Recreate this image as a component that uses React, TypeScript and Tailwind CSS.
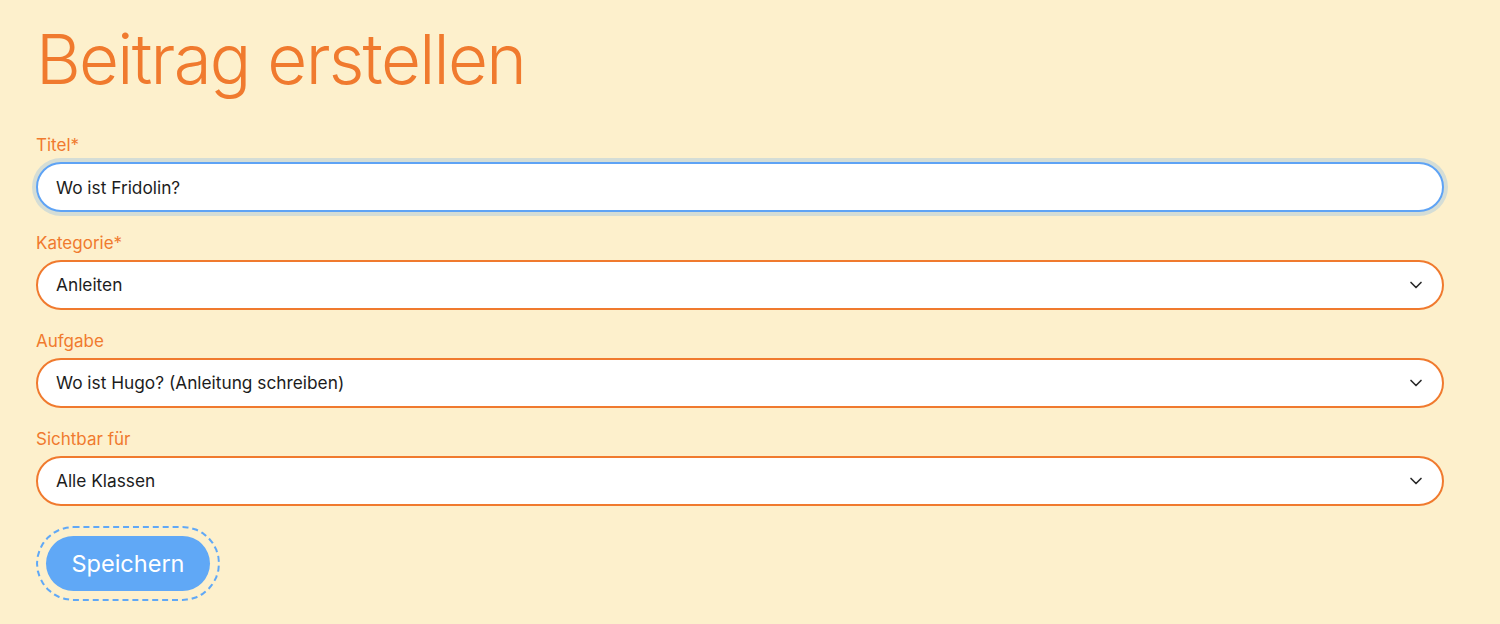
import { ChevronDown } from "lucide-react";

const font = { fontFamily: "Inter, 'Noto Sans', sans-serif" };

function SelectField({ label, value }: { label: string; value: string }) {
  return (
    <div className="mt-[19px]">
      <label className="mb-[5px] block text-[17px] leading-6 text-[#f07a2e]">{label}</label>
      <div className="relative">
        <select
          defaultValue={value}
          className="block h-[50px] w-full appearance-none rounded-full border-2 border-[#f07a2e] bg-white pl-[18px] pr-12 text-[17.3px] text-[#1c1c1c] outline-none"
        >
          <option>{value}</option>
        </select>
        <ChevronDown
          size={20}
          strokeWidth={2}
          className="pointer-events-none absolute right-[18px] top-1/2 -translate-y-1/2 text-[#2a2a2a]"
        />
      </div>
    </div>
  );
}

export default function App() {
  return (
    <div
      className="min-h-[624px] w-full bg-[#fdf0cc] px-9 pt-[23px] pb-8"
      style={font}
    >
      <h1 className="text-[69px] font-light leading-[72px] tracking-tight text-[#f07a2e]">
        Beitrag erstellen
      </h1>

      <form className="mt-[38px] w-[1408px]">
        <div>
          <label className="mb-[5px] block text-[17px] leading-6 text-[#f07a2e]">Titel*</label>
          <input
            type="text"
            defaultValue="Wo ist Fridolin?"
            className="block h-[50px] w-full rounded-full border-2 border-[#5ea3f5] bg-white pl-[18px] pr-5 text-[17.3px] text-[#1c1c1c] outline-none ring-4 ring-[#d4ddd6]"
          />
        </div>

        <SelectField label="Kategorie*" value="Anleiten" />
        <SelectField label="Aufgabe" value="Wo ist Hugo? (Anleitung schreiben)" />
        <SelectField label="Sichtbar für" value="Alle Klassen" />

        <div className="mt-[30px] pl-[10px]">
          <button
            type="button"
            className="h-[55px] w-[164px] rounded-full bg-[#60a8f6] text-[23.5px] font-normal text-white outline-2 outline-offset-[8px] outline-dashed outline-[#60a8f6]"
          >
            Speichern
          </button>
        </div>
      </form>
    </div>
  );
}
